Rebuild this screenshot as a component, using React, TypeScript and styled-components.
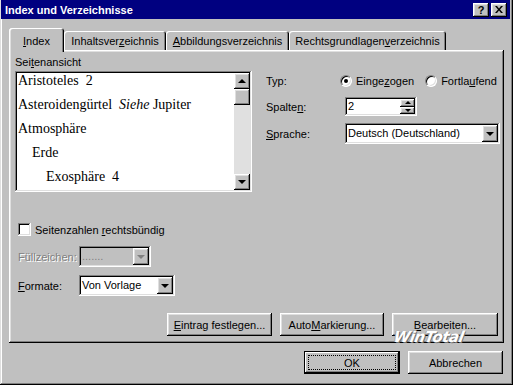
import React from 'react';
import styled, {createGlobalStyle, css} from 'styled-components';

const colors = {
  face: '#c0c0c0',
  light: '#dfdfdf',
  white: '#ffffff',
  shadow: '#808080',
  dark: '#000000',
  navy: '#000080',
  track: '#e0e0e0',
};

const raised = css`
  box-shadow: inset -1px -1px ${colors.dark}, inset 1px 1px ${colors.white},
    inset -2px -2px ${colors.shadow}, inset 2px 2px ${colors.light};
`;

const sunken = css`
  box-shadow: inset -1px -1px ${colors.white}, inset 1px 1px ${colors.shadow},
    inset -2px -2px ${colors.light}, inset 2px 2px ${colors.dark};
`;

const GlobalStyle = createGlobalStyle`
  html, body {
    margin: 0;
    padding: 0;
    background: ${colors.face};
  }
  body {
    font-family: "Liberation Sans", Arial, sans-serif;
    font-size: 11px;
    color: #000;
  }
`;

const App = () => {
  return (
    <>
      <GlobalStyle/>
      <Window>
        <TitleBar>
          <TitleText>Index und Verzeichnisse</TitleText>
          <TitleButtons>
            <CaptionButton>?</CaptionButton>
            <CaptionButton>
              <svg width="8" height="7" viewBox="0 0 8 7">
                <path d="M0 0h2l2 2.5L6 0h2L5 3.5 8 7H6L4 4.5 2 7H0l3-3.5z" fill="#000"/>
              </svg>
            </CaptionButton>
          </TitleButtons>
        </TitleBar>

        <Body>
          <TabStrip>
            <Tab $width={55} $active><u>I</u>ndex</Tab>
            <Tab $width={102}>Inhaltsver<u>z</u>eichnis</Tab>
            <Tab $width={123}><u>A</u>bbildungsverzeichnis</Tab>
            <Tab $width={157}>Rechtsgrundlagen<u>v</u>erzeichnis</Tab>
          </TabStrip>

          <Panel>
            <TopRow>
              <PreviewColumn>
                <Label>Sei<u>t</u>enansicht</Label>
                <ListBox>
                  <ListItems>
                    <Entry $level={0}>Aristoteles  2</Entry>
                    <Entry $level={0}>Asteroidengürtel  <i>Siehe</i> Jupiter</Entry>
                    <Entry $level={0}>Atmosphäre</Entry>
                    <Entry $level={1}>Erde</Entry>
                    <Entry $level={2}>Exosphäre  4</Entry>
                  </ListItems>
                  <ScrollBar>
                    <ArrowButton><Arrow $dir="up"/></ArrowButton>
                    <Thumb/>
                    <Track/>
                    <ArrowButton><Arrow $dir="down"/></ArrowButton>
                  </ScrollBar>
                </ListBox>
              </PreviewColumn>

              <OptionsColumn>
                <FieldRow $top={16}>
                  <FieldLabel $width={74}>Typ:</FieldLabel>
                  <Radio>
                    <RadioCircle $checked/>
                    <span>Einge<u>z</u>ogen</span>
                  </Radio>
                  <Radio>
                    <RadioCircle/>
                    <span>Fortla<u>u</u>fend</span>
                  </Radio>
                </FieldRow>
                <FieldRow $top={7}>
                  <FieldLabel $width={79}>Spalte<u>n</u>:</FieldLabel>
                  <Spinner>
                    <FieldText>2</FieldText>
                    <SpinButtons>
                      <SpinButton><Arrow $dir="up" $small/></SpinButton>
                      <SpinButton><Arrow $dir="down" $small/></SpinButton>
                    </SpinButtons>
                  </Spinner>
                </FieldRow>
                <FieldRow $top={7}>
                  <FieldLabel $width={79}><u>S</u>prache:</FieldLabel>
                  <Combo $width={155}>
                    <FieldText>Deutsch (Deutschland)</FieldText>
                    <DropButton><Arrow $dir="down"/></DropButton>
                  </Combo>
                </FieldRow>
              </OptionsColumn>
            </TopRow>

            <LowerBlock>
              <CheckRow>
                <CheckBox/>
                <span>Seitenzahlen <u>r</u>echtsbündig</span>
              </CheckRow>
              <FieldRow $top={10}>
                <FieldLabel $width={61} $disabled>Füllzeichen:</FieldLabel>
                <Combo $width={72} $disabled>
                  <FieldText $disabled>.......</FieldText>
                  <DropButton><Arrow $dir="down" $disabled/></DropButton>
                </Combo>
              </FieldRow>
              <FieldRow $top={8}>
                <FieldLabel $width={61}><u>F</u>ormate:</FieldLabel>
                <Combo $width={96}>
                  <FieldText>Von Vorlage</FieldText>
                  <DropButton><Arrow $dir="down"/></DropButton>
                </Combo>
              </FieldRow>
            </LowerBlock>

            <PanelButtons>
              <PushButton $width={105}><u>E</u>intrag festlegen...</PushButton>
              <PushButton $width={104}>Auto<u>M</u>arkierung...</PushButton>
              <PushButton $width={106}><u>B</u>earbeiten...</PushButton>
            </PanelButtons>
          </Panel>

          <Footer>
            <DefaultButton $width={96}>
              <FocusRing>OK</FocusRing>
            </DefaultButton>
            <PushButton $width={95}>Abbrechen</PushButton>
          </Footer>
        </Body>

        <Watermark>WinTotal</Watermark>
      </Window>
    </>
  );
};

const Window = styled.div`
  position: relative;
  width: 513px;
  height: 385px;
  box-sizing: border-box;
  padding: 0 3px 2px 1px;
  background: ${colors.face};
  box-shadow: inset -1px -1px ${colors.dark}, inset 1px 0 ${colors.light},
    inset -2px -2px ${colors.shadow}, inset 2px 0 ${colors.white};
  overflow: hidden;
`;

const TitleBar = styled.div`
  display: flex;
  align-items: center;
  justify-content: space-between;
  height: 19px;
  padding: 0 3px 0 4px;
  background: ${colors.navy};
`;

const TitleText = styled.span`
  color: ${colors.white};
  font-weight: bold;
  font-size: 11px;
`;

const TitleButtons = styled.div`
  display: flex;
  gap: 2px;
`;

const CaptionButton = styled.div`
  ${raised};
  width: 16px;
  height: 14px;
  display: flex;
  align-items: center;
  justify-content: center;
  background: ${colors.face};
  font-weight: bold;
  font-size: 11px;
  line-height: 14px;
`;

const Body = styled.div`
  display: flex;
  flex-direction: column;
  padding: 9px 6px 0 8px;
`;

const TabStrip = styled.div`
  display: flex;
  align-items: flex-end;
  height: 22px;
`;

const Tab = styled.div<{ $width: number; $active?: boolean }>`
  width: ${p => p.$width}px;
  height: ${p => (p.$active ? 24 : 19)}px;
  box-sizing: border-box;
  display: flex;
  justify-content: center;
  padding-top: ${p => (p.$active ? 7 : 4)}px;
  background: ${colors.face};
  border-radius: 3px 3px 0 0;
  box-shadow: inset 1px 1px ${colors.white}, inset -1px 0 ${colors.dark},
    inset -2px 0 ${colors.shadow};
  white-space: nowrap;
  ${p => p.$active && css`
    position: relative;
    z-index: 1;
    margin-bottom: -2px;
    box-shadow: inset 1px 1px ${colors.white}, inset 2px 0 ${colors.light},
      inset -1px 0 ${colors.dark}, inset -2px 0 ${colors.shadow};
  `}
`;

const Panel = styled.div`
  ${raised};
  height: 293px;
  box-sizing: border-box;
  display: flex;
  flex-direction: column;
  padding: 6px 6px 6px 6px;
  background: ${colors.face};
`;

const TopRow = styled.div`
  display: flex;
`;

const PreviewColumn = styled.div`
  display: flex;
  flex-direction: column;
  gap: 2px;
`;

const Label = styled.div`
  height: 13px;
  line-height: 13px;
`;

const ListBox = styled.div`
  ${sunken};
  width: 237px;
  height: 121px;
  box-sizing: border-box;
  padding: 2px;
  display: flex;
  background: ${colors.white};
`;

const ListItems = styled.div`
  flex: 1;
  overflow: hidden;
  padding: 0 0 0 1px;
`;

const Entry = styled.div<{ $level: number }>`
  padding-left: ${p => p.$level * 14}px;
  font-family: "Liberation Serif", "Times New Roman", serif;
  font-size: 14px;
  line-height: 24px;
  white-space: pre;
  &:first-child {
    margin-top: -4px;
  }
`;

const ScrollBar = styled.div`
  width: 16px;
  display: flex;
  flex-direction: column;
  background: ${colors.track};
`;

const ArrowButton = styled.div`
  ${raised};
  width: 16px;
  height: 16px;
  flex: none;
  display: flex;
  align-items: center;
  justify-content: center;
  background: ${colors.face};
`;

const Thumb = styled(ArrowButton)``;

const Track = styled.div`
  flex: 1;
`;

const Arrow = styled.span<{ $dir: 'up' | 'down'; $small?: boolean; $disabled?: boolean }>`
  width: 0;
  height: 0;
  border-left: ${p => (p.$small ? 3 : 4)}px solid transparent;
  border-right: ${p => (p.$small ? 3 : 4)}px solid transparent;
  ${p => (p.$dir === 'up' ? 'border-bottom' : 'border-top')}: ${p => (p.$small ? 3 : 4)}px solid
    ${p => (p.$disabled ? colors.shadow : colors.dark)};
`;

const OptionsColumn = styled.div`
  display: flex;
  flex-direction: column;
  margin-left: 14px;
`;

const FieldRow = styled.div<{ $top: number }>`
  display: flex;
  align-items: center;
  margin-top: ${p => p.$top}px;
  min-height: 18px;
`;

const FieldLabel = styled.span<{ $width: number; $disabled?: boolean }>`
  width: ${p => p.$width}px;
  flex: none;
  ${p => p.$disabled && css`
    color: ${colors.shadow};
    text-shadow: 1px 1px ${colors.white};
  `}
`;

const Radio = styled.span`
  display: flex;
  align-items: center;
  gap: 4px;
  margin-right: 11px;
`;

const RadioCircle = styled.span<{ $checked?: boolean }>`
  position: relative;
  width: 12px;
  height: 12px;
  box-sizing: border-box;
  border-radius: 50%;
  background: ${colors.white};
  border: 1px solid;
  border-color: ${colors.shadow} ${colors.white} ${colors.white} ${colors.shadow};
  box-shadow: inset 1px 1px ${colors.dark}, inset -1px -1px ${colors.light};
  &::after {
    content: '';
    display: ${p => (p.$checked ? 'block' : 'none')};
    position: absolute;
    left: 3px;
    top: 3px;
    width: 4px;
    height: 4px;
    border-radius: 50%;
    background: ${colors.dark};
  }
`;

const Spinner = styled.div`
  ${sunken};
  width: 72px;
  height: 19px;
  box-sizing: border-box;
  padding: 2px;
  display: flex;
  background: ${colors.white};
`;

const FieldText = styled.span<{ $disabled?: boolean }>`
  flex: 1;
  padding-left: 1px;
  line-height: 15px;
  white-space: nowrap;
  overflow: hidden;
  color: ${p => (p.$disabled ? colors.shadow : colors.dark)};
`;

const SpinButtons = styled.div`
  display: flex;
  flex-direction: column;
`;

const SpinButton = styled.div`
  ${raised};
  width: 15px;
  height: 7.5px;
  display: flex;
  align-items: center;
  justify-content: center;
  background: ${colors.face};
`;

const Combo = styled.div<{ $width: number; $disabled?: boolean }>`
  ${sunken};
  width: ${p => p.$width}px;
  height: 21px;
  box-sizing: border-box;
  padding: 2px;
  display: flex;
  align-items: center;
  background: ${p => (p.$disabled ? colors.face : colors.white)};
`;

const DropButton = styled(ArrowButton)`
  height: 17px;
`;

const LowerBlock = styled.div`
  display: flex;
  flex-direction: column;
  padding-left: 3px;
  margin-top: 31px;
`;

const CheckRow = styled.label`
  display: flex;
  align-items: center;
  gap: 4px;
  height: 13px;
`;

const CheckBox = styled.span`
  ${sunken};
  width: 13px;
  height: 13px;
  background: ${colors.white};
`;

const PanelButtons = styled.div`
  display: flex;
  justify-content: flex-end;
  gap: 8px;
  margin-top: 17px;
`;

const PushButton = styled.div<{ $width: number }>`
  ${raised};
  width: ${p => p.$width}px;
  height: 23px;
  box-sizing: border-box;
  display: flex;
  align-items: center;
  justify-content: center;
  background: ${colors.face};
  white-space: nowrap;
`;

const DefaultButton = styled(PushButton)`
  box-shadow: inset 0 0 0 1px ${colors.dark}, inset -2px -2px ${colors.dark},
    inset 2px 2px ${colors.white}, inset -3px -3px ${colors.shadow};
  padding: 4px;
`;

const FocusRing = styled.span`
  flex: 1;
  align-self: stretch;
  display: flex;
  align-items: center;
  justify-content: center;
  border: 1px dotted ${colors.dark};
`;

const Footer = styled.div`
  display: flex;
  justify-content: flex-end;
  gap: 8px;
  margin-top: 8px;
  padding-right: 1px;
`;

const Watermark = styled.span`
  position: absolute;
  left: 394px;
  top: 328px;
  font-family: "DejaVu Sans", sans-serif;
  font-size: 15px;
  font-weight: bold;
  font-style: italic;
  letter-spacing: -0.5px;
  color: ${colors.white};
  text-shadow: 1px 1px 0 #707070, -1px 0 0 #a0a0a0;
  transform: skewX(-10deg);
`;

export default App;
